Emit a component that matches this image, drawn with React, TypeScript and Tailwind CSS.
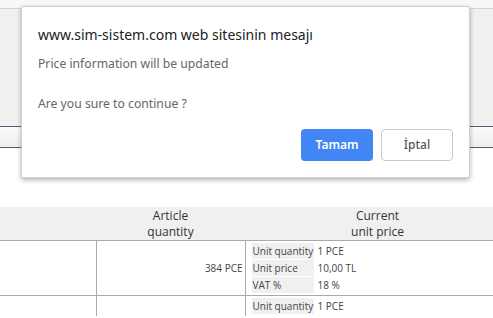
const UnitRows = ({ price, vat }: { price: string; vat: string }) => (
  <div className="grid grid-cols-[62px_1fr] gap-x-[4px] gap-y-px py-[2px] pl-[6px]">
    <div className="bg-[#f0f0f0] pl-[1px] leading-[16px]">Unit quantity</div>
    <div className="leading-[16px]">1 PCE</div>
    {price && (
      <>
        <div className="bg-[#f0f0f0] pl-[1px] leading-[16px]">Unit price</div>
        <div className="leading-[16px]">{price}</div>
        <div className="bg-[#f0f0f0] pl-[1px] leading-[16px]">VAT %</div>
        <div className="leading-[16px]">{vat}</div>
      </>
    )}
  </div>
);

export default function App() {
  return (
    <div className="relative w-[493px] h-[318px] overflow-hidden bg-white font-['Open_Sans',sans-serif]">
      {/* page behind the dialog */}
      <div className="h-[9px] bg-[#f8f8f8] border-b border-[#d4d4d4]" />
      <div className="h-[117px] bg-[#f1f1f1]" />
      <div className="h-[22px] border-y border-[#4f5d78] bg-gradient-to-b from-[#fbfbfb] to-[#eeeeee]" />
      <div className="h-[59px] bg-white" />

      <table className="w-[520px] border-collapse text-[10px] text-[#444]">
        <thead>
          <tr className="bg-[#f0f0f0] text-[12px] text-[#333]">
            <th className="w-[96px] h-[32px] border-b border-[#aaa] font-normal" />
            <th className="w-[149px] border-b border-[#aaa] font-normal leading-[16px] pt-[1px]">
              Article
              <br />
              quantity
            </th>
            <th className="border-b border-[#aaa] font-normal leading-[16px] pt-[1px] pr-[10px]">
              Current
              <br />
              unit price
            </th>
          </tr>
        </thead>
        <tbody>
          <tr className="border-b border-[#aaa]">
            <td className="border-r border-[#aaa] h-[55px]" />
            <td className="border-r border-[#aaa] text-right align-middle pr-[2px]">384 PCE</td>
            <td className="p-0">
              <UnitRows price="10,00 TL" vat="18 %" />
            </td>
          </tr>
          <tr>
            <td className="border-r border-[#aaa]" />
            <td className="border-r border-[#aaa]" />
            <td className="p-0 align-top">
              <UnitRows price="" vat="" />
            </td>
          </tr>
        </tbody>
      </table>

      {/* alert dialog */}
      <div className="absolute left-[21px] top-[6px] w-[449px] h-[172px] bg-white border border-[#cfcfcf] rounded-[2px] shadow-[0_2px_5px_rgba(0,0,0,0.3)] font-['Noto_Sans',sans-serif] px-[16px] pt-[18px] flex flex-col">
        <div className="text-[14px] leading-[20px] text-[#202124]">
          www.sim-sistem.com web sitesinin mesajı
        </div>
        <div className="mt-[11px] text-[12.2px] leading-[16px] text-[#666]">
          Price information will be updated
        </div>
        <div className="mt-[24px] text-[12.2px] leading-[16px] text-[#666]">
          Are you sure to continue ?
        </div>
        <div className="mt-[17px] flex justify-end gap-[8px]">
          <button className="w-[72px] h-[32px] rounded-[4px] bg-[#4285f4] text-white text-[12px] font-semibold">
            Tamam
          </button>
          <button className="w-[72px] h-[32px] rounded-[4px] border border-[#c8c8c8] bg-white text-[#555] text-[12px] font-medium">
            İptal
          </button>
        </div>
      </div>
    </div>
  );
}
